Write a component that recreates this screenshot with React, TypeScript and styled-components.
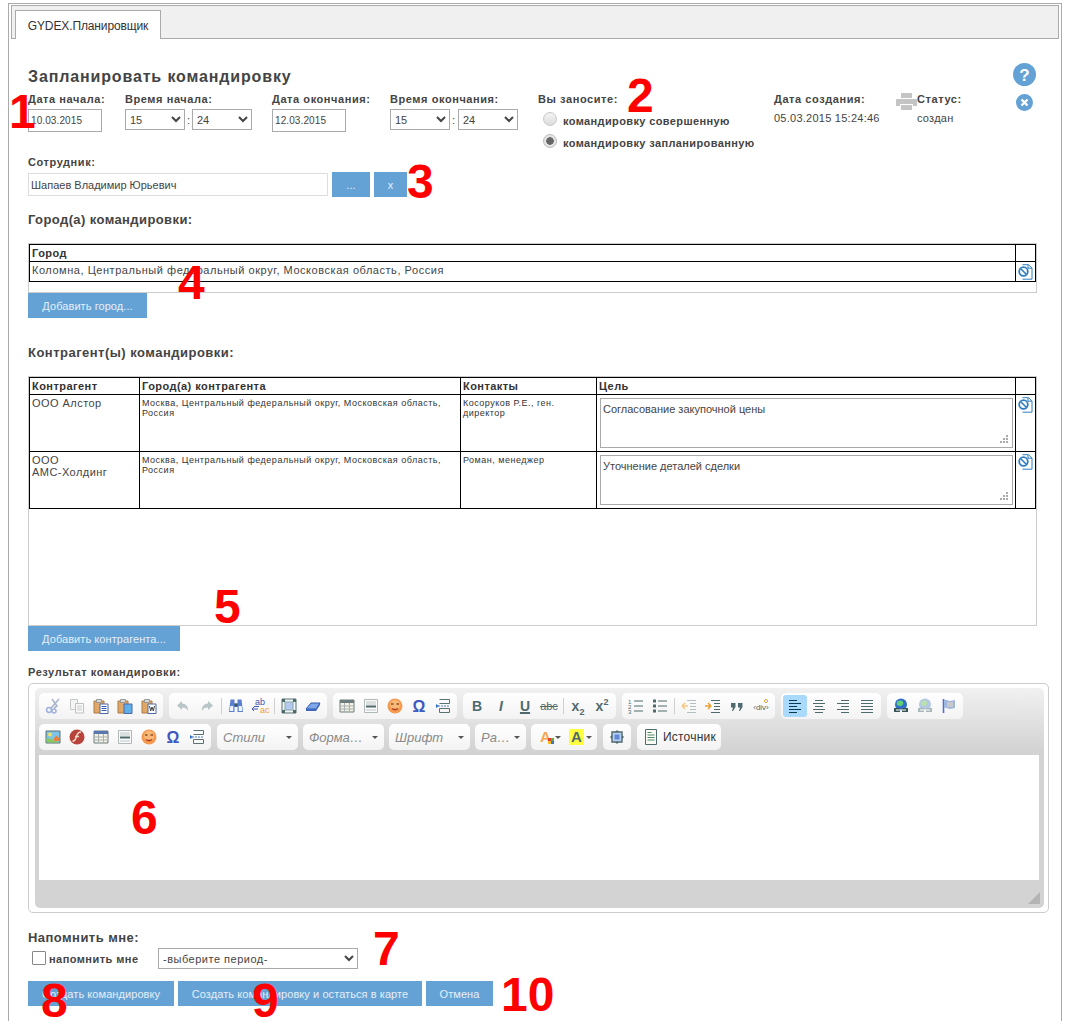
import React from 'react';
import styled, { createGlobalStyle } from 'styled-components';

const blue = '#64a2d6';

const Global = createGlobalStyle`
  html, body { margin: 0; padding: 0; height: 1021px; overflow: hidden; background: #fff; }
  body { font-family: "Liberation Sans", Arial, sans-serif; font-size: 12px; color: #444; }
`;

const Page = styled.div`
  position: relative;
  box-sizing: border-box;
  width: 1054px;
  height: 1018px;
  margin: 3px 0 0 8px;
  border: 1px solid #aaa;
  border-bottom: none;
  padding: 1px 2px 0;
`;

const TabStrip = styled.div`
  display: flex;
  align-items: flex-end;
  box-sizing: border-box;
  height: 34px;
  padding-left: 3px;
  background: #f0f0f0;
  border: 1px solid #aaa;
`;

const Tab = styled.div`
  box-sizing: border-box;
  width: 146px;
  height: 29px;
  margin-bottom: -1px;
  padding-top: 8px;
  text-align: center;
  background: #fff;
  border: 1px solid #aaa;
  border-bottom: none;
  font-size: 12px;
  letter-spacing: -0.12px;
  color: #333;
`;

const Form = styled.div`
  padding: 26px 22px 0 17px;
`;

const TitleRow = styled.div`
  display: flex;
  justify-content: space-between;
  height: 30px;
`;

const Title = styled.h1`
  margin: 2px 0 0;
  font-size: 16px;
  font-weight: bold;
  line-height: 20px;
  letter-spacing: 0.86px;
  color: #444;
`;

const HelpWrap = styled.div`
  margin: -2px 1px 0 0;
`;

const FieldsRow = styled.div`
  display: flex;
  height: 63px;
  margin-top: -2px;
`;

const Field = styled.div<{ $w: number }>`
  width: ${({ $w }) => $w}px;
  flex: none;
`;

const Label = styled.div`
  font-size: 11px;
  font-weight: bold;
  line-height: 13px;
  letter-spacing: 0.57px;
  color: #444;
  margin-bottom: 3px;
`;

const ResultLabel = styled(Label)`
  margin-top: 15px;
`;

const TextInput = styled.input<{ $w: number; $light?: boolean; $date?: boolean }>`
  display: block;
  box-sizing: border-box;
  width: ${({ $w }) => $w}px;
  height: 23px;
  padding: 0 2px;
  border: 1px solid ${({ $light }) => ($light ? '#ddd' : '#aaa')};
  border-radius: 0;
  outline: none;
  font-family: inherit;
  font-size: ${({ $date }) => ($date ? 10 : 11)}px;
  letter-spacing: ${({ $date }) => ($date ? 0.1 : 0)}px;
  color: #444;
`;

const TimeRow = styled.div`
  display: flex;
  align-items: center;
  gap: 2px;
  font-size: 11px;
`;

const Colon = styled.span<{ $w: number }>`
  width: ${({ $w }) => $w}px;
`;

const Select = styled.select<{ $w: number }>`
  box-sizing: border-box;
  width: ${({ $w }) => $w}px;
  height: 21px;
  padding: 0;
  background: #fff;
  border: 1px solid #aaa;
  border-radius: 0;
  font-family: inherit;
  font-size: 11px;
  color: #444;
`;

const RadioLine = styled.label`
  display: flex;
  align-items: center;
  gap: 6px;
  box-sizing: border-box;
  height: 22px;
  margin-left: 5px;
  padding-top: 2px;
  font-size: 11px;
  font-weight: bold;
  letter-spacing: 0.38px;
  color: #444;
`;

const Radio = styled.input`
  appearance: none;
  box-sizing: border-box;
  width: 14px;
  height: 14px;
  margin: -4px 0 0;
  border: 1px solid #c8c8c8;
  border-radius: 50%;
  background: linear-gradient(#f4f4f4, #dcdcdc);
  &:checked {
    background: radial-gradient(circle, #666 0 3.5px, #e4e4e4 4px);
    border-color: #bbb;
  }
`;

const Value = styled.div`
  font-size: 11px;
  letter-spacing: 0.25px;
  line-height: 13px;
  margin-top: 6px;
  color: #444;
`;

const StatusBlock = styled.div`
  display: flex;
`;

const SideIcons = styled.div`
  margin-left: auto;
  padding: 1px 4px 0 0;
`;

const EmployeeRow = styled.div`
  display: flex;
  align-items: center;
  gap: 4px;
`;

const Button = styled.button<{ $w: number }>`
  flex: none;
  box-sizing: border-box;
  width: ${({ $w }) => $w}px;
  height: 25px;
  padding: 0;
  border: none;
  background: ${blue};
  color: #e6eff7;
  font-family: inherit;
  font-size: 11px;
  letter-spacing: 0.07px;
`;

const SectionTitle = styled.h2<{ $top: number; $track?: number }>`
  margin: ${({ $top }) => $top}px 0 0;
  font-size: 13px;
  font-weight: bold;
  line-height: 16px;
  letter-spacing: ${({ $track }) => $track ?? 0.4}px;
  color: #444;
`;

const TablePanel = styled.div<{ $top: number; $h: number }>`
  box-sizing: border-box;
  width: 1009px;
  height: ${({ $h }) => $h}px;
  margin-top: ${({ $top }) => $top}px;
  border: 1px solid #ccc;
`;

const Grid = styled.table`
  width: 100%;
  table-layout: fixed;
  border-collapse: collapse;
  th, td {
    border: 1px solid #000;
    padding: 1px 2px;
    vertical-align: top;
    text-align: left;
    overflow: hidden;
  }
  th {
    height: 14px;
    font-size: 11px;
    line-height: 14px;
    letter-spacing: 0.45px;
    color: #333;
  }
`;

const CityCell = styled.td`
  height: 17px;
  font-size: 11px;
  line-height: 14px;
  letter-spacing: 0.54px;
`;

const NameCell = styled.td`
  font-size: 11px;
  line-height: 12px;
  letter-spacing: 0.45px;
  padding-top: 2px !important;
`;

const SmallCell = styled.td`
  font-size: 9px;
  line-height: 10px;
  letter-spacing: 0.5px;
  color: #333;
  padding-top: 3px !important;
`;

const GoalCell = styled.td`
  padding: 3px !important;
`;

const IconCell = styled.td`
  padding: 2px 0 0 2px !important;
  line-height: 0;
`;

const GoalArea = styled.textarea`
  display: block;
  box-sizing: border-box;
  width: 413px;
  height: 50px;
  padding: 4px 2px;
  border: 1px solid #aaa;
  border-radius: 0;
  resize: both;
  outline: none;
  font-family: inherit;
  font-size: 11px;
  color: #444;
  &::-webkit-resizer {
    background:
      linear-gradient(#aaa, #aaa) 9px 3px / 2px 2px no-repeat,
      linear-gradient(#aaa, #aaa) 6px 6px / 2px 2px no-repeat,
      linear-gradient(#aaa, #aaa) 9px 6px / 2px 2px no-repeat,
      linear-gradient(#aaa, #aaa) 3px 9px / 2px 2px no-repeat,
      linear-gradient(#aaa, #aaa) 6px 9px / 2px 2px no-repeat,
      linear-gradient(#aaa, #aaa) 9px 9px / 2px 2px no-repeat;
  }
`;

const EditorFrame = styled.div`
  box-sizing: border-box;
  width: 1021px;
  height: 230px;
  margin-top: 4px;
  padding: 4px 4px 4px 6px;
  border: 1px solid #ccc;
  border-radius: 5px;
`;

const EditorBox = styled.div`
  position: relative;
  height: 220px;
  border-radius: 5px;
  padding: 5px 0 0 4px;
  box-sizing: border-box;
  background: linear-gradient(#f1f1f1 0, #d3d3d3 62px);
`;

const ToolRow = styled.div<{ $gap: number }>`
  display: flex;
  gap: ${({ $gap }) => $gap}px;
  height: 26px;
  margin-bottom: 5px;
`;

const ToolGroup = styled.div<{ $ml?: number; $mr?: number }>`
  display: flex;
  flex: none;
  align-items: center;
  height: 26px;
  margin: 0 ${({ $mr }) => $mr ?? 0}px 0 ${({ $ml }) => $ml ?? 0}px;
  padding: 0 2px;
  border-radius: 5px;
  background: linear-gradient(#fff, #f3f3f3);
  box-sizing: border-box;
`;

const ToolBtn = styled.span<{ $on?: boolean; $w?: number }>`
  display: flex;
  align-items: center;
  justify-content: center;
  width: ${({ $w }) => $w ?? 24}px;
  height: 22px;
  border-radius: 3px;
  background: ${({ $on }) => ($on ? '#a9d9fb' : 'transparent')};
  color: #4f6a6d;
`;

const ToolSep = styled.span`
  width: 1px;
  height: 16px;
  margin: 0 2px;
  background: #d0d0d0;
`;

const Glyph = styled.span<{ $italic?: boolean; $under?: boolean; $strike?: boolean; $size?: number }>`
  font-family: "Liberation Sans", Arial, sans-serif;
  font-size: ${({ $size }) => $size ?? 14}px;
  font-weight: ${({ $strike }) => ($strike ? 'normal' : 'bold')};
  font-style: ${({ $italic }) => ($italic ? 'italic' : 'normal')};
  text-decoration: ${({ $under, $strike }) => ($under ? 'underline' : $strike ? 'line-through' : 'none')};
  text-decoration-thickness: ${({ $strike }) => ($strike ? 1 : 2)}px;
  color: #4f6a6d;
  sub, sup { font-size: 9px; line-height: 0; }
`;

const Combo = styled.div<{ $w: number }>`
  display: flex;
  flex: none;
  align-items: center;
  justify-content: space-between;
  box-sizing: border-box;
  width: ${({ $w }) => $w}px;
  height: 26px;
  padding: 0 6px;
  border-radius: 5px;
  background: linear-gradient(#fff, #f3f3f3);
  font-size: 13px;
  font-style: italic;
  color: #8a8a8a;
  white-space: nowrap;
`;

const Caret = styled.span`
  width: 0;
  height: 0;
  border-left: 3px solid transparent;
  border-right: 3px solid transparent;
  border-top: 3px solid #555;
`;

const SourceBtn = styled(ToolGroup)`
  gap: 6px;
  width: 84px;
  padding: 0 0 0 8px;
  font-size: 12px;
  letter-spacing: 0.2px;
  color: #333;
`;

const EditArea = styled.div`
  height: 125px;
  width: 1000px;
  background: #fff;
`;

const Grip = styled.svg`
  position: absolute;
  right: 4px;
  bottom: 4px;
`;

const RemindTitle = styled.div`
  margin-top: 17px;
  font-size: 13px;
  font-weight: bold;
  line-height: 15px;
  letter-spacing: 0.45px;
  color: #444;
`;

const RemindRow = styled.div`
  display: flex;
  align-items: center;
  height: 21px;
  margin-top: 3px;
`;

const CheckLabel = styled.label`
  display: flex;
  align-items: center;
  width: 130px;
  padding-left: 4px;
  box-sizing: border-box;
  font-size: 11px;
  font-weight: bold;
  letter-spacing: 0.45px;
`;

const Check = styled.input`
  appearance: none;
  box-sizing: border-box;
  width: 14px;
  height: 14px;
  margin: -2px 3px 0 0;
  border: 1px solid #888;
  border-radius: 1px;
  background: #fff;
`;

const PeriodSelect = styled(Select)`
  letter-spacing: 0.5px;
`;

const ButtonsRow = styled.div`
  display: flex;
  gap: 4px;
  margin-top: 12px;
`;

const Marker = styled.div<{ $x: number; $y: number }>`
  position: absolute;
  left: ${({ $x }) => $x}px;
  top: ${({ $y }) => $y}px;
  font-family: "Liberation Sans", Arial, sans-serif;
  font-size: 48px;
  font-weight: bold;
  line-height: 40px;
  color: #f00;
  pointer-events: none;
`;

const Svg: React.FC<{ size?: number; children: React.ReactNode }> = ({ size = 16, children }) => (
  <svg width={size} height={size} viewBox="0 0 16 16" fill="none">{children}</svg>
);

const Scissors = () => (
  <Svg>
    <path d="M14 1 6 10M7 1l5 7-3 2" stroke="#aab5cc" strokeWidth="1.6" />
    <circle cx="4" cy="12" r="2.4" stroke="#9fb0dc" strokeWidth="1.5" />
    <circle cx="9" cy="13" r="2" stroke="#9fb0dc" strokeWidth="1.5" />
  </Svg>
);
const Copy = () => (
  <Svg>
    <path d="M1.5 1.5h7v10h-7z" fill="#f4f4f4" stroke="#c4c8c8" />
    <path d="M6.5 5.500h8v9.500h-8z" fill="#fafafa" stroke="#bcc2c2" />
    <path d="M8 8h5M8 10h5M8 12h5" stroke="#c8cccc" />
  </Svg>
);
const Paste: React.FC<{ kind: 'plain' | 'text' | 'word' }> = ({ kind }) => (
  <Svg>
    <path d="M1 3h10v12H1z" fill="#e0a868" stroke="#b07c40" />
    <path d="M3.500 1.500h5v3h-5z" fill="#d8d8d8" stroke="#999" />
    <path d="M7 6h8v9.500H7z" fill={kind === 'text' ? '#5fb0e8' : '#fff'} stroke="#5068a8" />
    {kind === 'plain' && <path d="M8.500 8.500h5M8.500 10.500h5M8.500 12.500h5" stroke="#3858b8" />}
    {kind === 'word' && <path d="M8.500 8l1.200 5 1.300-4 1.300 4 1.200-5" stroke="#444" />}
  </Svg>
);
const Arrow: React.FC<{ flip?: boolean }> = ({ flip }) => (
  <Svg>
    <path
      d={flip ? 'M9 3l5 4.500-5 4.500V9.500C6 9.500 4 10.500 3 13c-.5-4 1.500-7 6-7.500z' : 'M7 3 2 7.500 7 12V9.500c3 0 5 1 6 3.500.5-4-1.500-7-6-7.500z'}
      fill="#b8c6c8"
    />
  </Svg>
);
const Binoculars = () => (
  <Svg>
    <path d="M2.500 1.500h4v4h3v-4h4L15 14H9.500V9h-3v5H1z" fill="#5a7ed0" />
    <path d="M2.300 8h3v5h-3.500zM10.700 8h3l.5 5h-3.500z" fill="#eef4fc" />
    <path d="M6.500 5.500h3v3h-3z" fill="#3c5658" />
  </Svg>
);
const Replace = () => (
  <svg width="20" height="16" viewBox="0 0 20 16">
    <text x="5" y="7" fontFamily="Liberation Sans" fontSize="9" fill="#4058b0">ab</text>
    <text x="10" y="15" fontFamily="Liberation Sans" fontSize="9" fill="#f0a030">ac</text>
    <path d="M2 11h6M2 11l2-2M2 11l2 2M4 8.500h5" stroke="#4058b0" />
  </svg>
);
const SelectAll = () => (
  <Svg>
    <path d="M1 1h14v14H1z" fill="#eef3f4" stroke="#5a7272" />
    <path d="M4 4h8v8H4z" fill="#b4c8f0" stroke="#8aa" />
    <path d="M1 1h3v3H1zM12 1h3v3h-3zM1 12h3v3H1zM12 12h3v3h-3z" fill="#4f6a6d" />
  </Svg>
);
const Eraser = () => (
  <Svg>
    <path d="M1 11 6 5h9l-4 6z" fill="#7fa8ea" stroke="#3058b0" />
    <path d="M1 11v2h10l4-6V5l-4 6z" fill="#3f68c0" />
  </Svg>
);
const TableIcon: React.FC<{ dark?: boolean }> = ({ dark }) => (
  <Svg>
    <path d="M1 2h14v12H1z" fill="#f4f0e4" stroke="#6c7c7c" />
    <path d="M1 2h14v3H1z" fill={dark ? '#6c7c7c' : '#5a78b0'} />
    <path d="M1 8h14M1 11h14M5.500 5v9M10.500 5v9" stroke="#a8b0b0" />
  </Svg>
);
const HrIcon = () => (
  <Svg>
    <path d="M1.500 1.500h13v13h-13z" fill="#fafafa" stroke="#b0b8b8" />
    <path d="M3 4h10M3 6h10M3 12h10" stroke="#c0c6c6" />
    <path d="M3 8.500h10" stroke="#4f6a6d" strokeWidth="2" />
  </Svg>
);
const Smiley = () => (
  <Svg>
    <circle cx="8" cy="8" r="7.500" fill="#f59a50" />
    <circle cx="8" cy="7" r="5" fill="#f9b878" />
    <path d="M4 6h2.500M9.500 6H12" stroke="#885020" strokeWidth="1.500" />
    <path d="M5 10.500c2 1.500 4 1.500 6 0" stroke="#b04020" strokeWidth="1.500" />
  </Svg>
);
const Omega = () => (
  <svg width="16" height="16" viewBox="0 0 16 16">
    <text x="8" y="14" textAnchor="middle" fontFamily="Liberation Sans" fontWeight="bold" fontSize="16" fill="#4058c0">Ω</text>
  </svg>
);
const PageBreak = () => (
  <Svg>
    <path d="M4.500 1.500h10v4M4.500 5.500h10M4.500 10.500h10v4h-10z" stroke="#5a7272" />
    <path d="M1 6v4l3-2z" fill="#3070d0" />
    <path d="M3 8h12" stroke="#5080c0" strokeDasharray="2 1" />
  </Svg>
);
const ListNum = () => (
  <svg width="16" height="16" viewBox="0 0 16 16">
    <text x="0" y="5.500" fontFamily="Liberation Sans" fontSize="6" fill="#4f6a6d">1</text>
    <text x="0" y="10.500" fontFamily="Liberation Sans" fontSize="6" fill="#4f6a6d">2</text>
    <text x="0" y="15.500" fontFamily="Liberation Sans" fontSize="6" fill="#4f6a6d">3</text>
    <path d="M6 3h9M6 8h9M6 13h9" stroke="#4f6a6d" />
  </svg>
);
const ListDot = () => (
  <Svg>
    <path d="M1 1.500h3v3H1zM1 6.500h3v3H1zM1 11.500h3v3H1z" fill="#4f6a6d" />
    <path d="M6 3h9M6 8h9M6 13h9" stroke="#4f6a6d" />
  </Svg>
);
const Indent: React.FC<{ out?: boolean }> = ({ out }) => (
  <Svg>
    <path d="M6 2.500h9M9 5.500h6M9 8.500h6M9 11.500h6M6 14.500h9" stroke={out ? '#b0c0c0' : '#4f6a6d'} />
    <path d={out ? 'M7 8H1M1 8l3-3M1 8l3 3' : 'M0 8h6M6 8 3 5M6 8l-3 3'} stroke={out ? '#f8c880' : '#f0a030'} strokeWidth="1.500" />
  </Svg>
);
const Quote = () => (
  <Svg>
    <path d="M2 5h4.500v4L4 13H3l1-3.500H2zM9 5h4.500v4L11 13h-1l1-3.500H9z" fill="#4f6a6d" />
  </Svg>
);
const DivIcon = () => (
  <svg width="18" height="16" viewBox="0 0 18 16">
    <text x="9" y="12" textAnchor="middle" fontFamily="Liberation Sans" fontSize="8" fill="#4f6a6d">‹div›</text>
    <path d="M14 1l2 2-2 2-2-2z" stroke="#f0a030" fill="none" />
  </svg>
);
const Align: React.FC<{ mode: 'l' | 'c' | 'r' | 'j'; dark?: boolean }> = ({ mode, dark }) => {
  const lines: Record<string, string> = {
    l: 'M2 2.500h8M2 5.500h12M2 8.500h8M2 11.500h12M2 14.500h8',
    c: 'M4 2.500h8M2 5.500h12M4 8.500h8M2 11.500h12M4 14.500h8',
    r: 'M6 2.500h8M2 5.500h12M6 8.500h8M2 11.500h12M6 14.500h8',
    j: 'M2 2.500h12M2 5.500h12M2 8.500h12M2 11.500h12M2 14.500h12',
  };
  return <Svg><path d={lines[mode]} stroke={dark ? '#0a3a50' : '#4f6a6d'} /></Svg>;
};
const Link: React.FC<{ off?: boolean }> = ({ off }) => (
  <Svg>
    <circle cx="8" cy="6.500" r="6" fill={off ? '#b4c8e4' : '#3070c8'} />
    <path d="M4 4c2-2 5-2 6 0 1 2-1 4-3 4-2 0-4-1-3-4z" fill={off ? '#b8e0b0' : '#60d070'} />
    <path d="M1 10h6v4H1zM9 10h6v4H9z" fill={off ? '#a8b8b8' : '#3c5658'} />
    <path d="M3 12h10" stroke="#fff" />
  </Svg>
);
const Flag = () => (
  <Svg>
    <path d="M2.500 1v14" stroke="#5070d0" strokeWidth="1.600" />
    <path d="M3 2c3-1 4 1 6 1l5-1v8l-5 1c-2 0-3-2-6-1z" fill="#9fb8e0" />
    <path d="M6 4h6v5H6z" fill="#c8c8c8" />
  </Svg>
);
const ImageIcon = () => (
  <Svg>
    <path d="M1 2h14v12H1z" fill="#7cc4e8" stroke="#5c7070" />
    <path d="M1.500 13.500V9l5 1 8 3.500z" fill="#8cc860" />
    <path d="M9 9l2.500-2.500L14 9v3H9z" fill="#e88040" />
    <circle cx="5" cy="5.500" r="2" fill="#f8e060" />
  </Svg>
);
const Flash = () => (
  <svg width="16" height="16" viewBox="0 0 16 16">
    <circle cx="8" cy="8" r="7.500" fill="#b8433a" />
    <path d="M12 3c-4 0-4 3-5 6-.5 2-2 3-3.500 3.500M6 7.500h4" stroke="#f4d8c8" strokeWidth="1.400" fill="none" />
  </svg>
);
const ColorA: React.FC<{ bg?: boolean }> = ({ bg }) => (
  <svg width="18" height="16" viewBox="0 0 18 16">
    {bg && <rect x="1" y="0" width="15" height="16" fill="#ffff40" />}
    <text x="8.500" y="13" textAnchor="middle" fontFamily="Liberation Sans" fontWeight="bold" fontSize="15" fill={bg ? '#4f6a6d' : '#f8a850'}>A</text>
    {!bg && <path d="M11 9h3v3h-3z" fill="#e04030" />}
    {!bg && <path d="M14 9h3v3h-3z" fill="#60b040" />}
    {!bg && <path d="M11 12h3v3h-3z" fill="#f0c020" />}
    {!bg && <path d="M14 12h3v3h-3z" fill="#4070d0" />}
  </svg>
);
const Chip = () => (
  <Svg>
    <path d="M3 3h10v10H3z" fill="#b8d0f4" stroke="#4f6a6d" strokeWidth="1.400" />
    <path d="M5.500 5.500h5v5h-5z" fill="#6488d8" />
    <path d="M1 8l2-2v4zM15 8l-2-2v4zM8 1 6 3h4zM8 15l-2-2h4z" fill="#4f6a6d" />
  </Svg>
);
const SourceIcon = () => (
  <svg width="12" height="16" viewBox="0 0 12 16" fill="none">
    <path d="M.5.5h11v15H.5z" fill="#fafaf4" stroke="#4f6a6d" />
    <path d="M2.500 3.500h4M2.500 6h7M2.500 8.500h7M2.500 11h7" stroke="#4f8a6d" />
  </svg>
);

const Printer = () => (
  <svg width="21" height="17" viewBox="0 0 21 17">
    <path d="M5 0h11v5H5z" fill="#c4c4c4" />
    <path d="M1 6h19a1 1 0 0 1 1 1v6h-4v-2H4v2H0V7a1 1 0 0 1 1-1z" fill="#c4c4c4" />
    <path d="M5 12h11v5H5z" fill="#c4c4c4" />
  </svg>
);
const HelpIcon = () => (
  <svg width="23" height="23" viewBox="0 0 23 23">
    <circle cx="11.500" cy="11.500" r="11.500" fill={blue} />
    <text x="11.500" y="17.500" textAnchor="middle" fontFamily="Liberation Sans" fontWeight="bold" fontSize="17" fill="#fff">?</text>
  </svg>
);
const CloseIcon = () => (
  <svg width="17" height="17" viewBox="0 0 17 17">
    <circle cx="8.500" cy="8.500" r="8.500" fill={blue} />
    <path d="M5.500 5.500l6 6M11.500 5.500l-6 6" stroke="#fff" strokeWidth="2.400" />
  </svg>
);
const RemoveDoc = () => (
  <svg width="15" height="16" viewBox="0 0 15 16" fill="none">
    <path d="M4.500 .7h6l3.500 3.500v11H4.500" stroke="#2f7fc0" fill="#fff" />
    <path d="M10 .7v3.500h4" stroke="#2f7fc0" />
    <circle cx="5.500" cy="7.500" r="4.300" stroke="#2f7fc0" strokeWidth="1.800" fill="#fff" />
    <path d="M2.700 4.700l5.600 5.600" stroke="#2f7fc0" strokeWidth="1.600" />
  </svg>
);
const Resize = () => (
  <Grip width="12" height="12" viewBox="0 0 12 12">
    <path d="M12 0v12H0z" fill="#b4b4b4" />
  </Grip>
);

const hours = <option>15</option>;
const mins = <option>24</option>;

const contractors = [
  {
    name: <>ООО Алстор</>,
    city: 'Москва, Центральный федеральный округ, Московская область, Россия',
    contact: 'Косоруков Р.Е., ген. директор',
    goal: 'Согласование закупочной цены',
  },
  {
    name: <>ООО<br />АМС-Холдинг</>,
    city: 'Москва, Центральный федеральный округ, Московская область, Россия',
    contact: 'Роман, менеджер',
    goal: 'Уточнение деталей сделки',
  },
];

const markers: [string, number, number][] = [
  ['1', 0, 88], ['2', 618, 72], ['3', 398, 158], ['4', 169, 259], ['5', 205, 583],
  ['6', 122, 794], ['7', 364, 925], ['8', 32, 977], ['9', 243, 977], ['10', 492, 971],
];

const App: React.FC = () => {
  return (
    <Page>
      <Global />
      <TabStrip>
        <Tab>GYDEX.Планировщик</Tab>
      </TabStrip>
      <Form>
        <TitleRow>
          <Title>Запланировать командировку</Title>
          <HelpWrap><HelpIcon /></HelpWrap>
        </TitleRow>
        <FieldsRow>
          <Field $w={97}>
            <Label>Дата начала:</Label>
            <TextInput $w={74} $date defaultValue="10.03.2015" />
          </Field>
          <Field $w={147}>
            <Label>Время начала:</Label>
            <TimeRow>
              <Select $w={60}>{hours}</Select><Colon $w={3}>:</Colon><Select $w={60}>{mins}</Select>
            </TimeRow>
          </Field>
          <Field $w={118}>
            <Label>Дата окончания:</Label>
            <TextInput $w={74} $date defaultValue="12.03.2015" />
          </Field>
          <Field $w={148}>
            <Label>Время окончания:</Label>
            <TimeRow>
              <Select $w={60}>{hours}</Select><Colon $w={4}>:</Colon><Select $w={60}>{mins}</Select>
            </TimeRow>
          </Field>
          <Field $w={236}>
            <Label>Вы заносите:</Label>
            <RadioLine><Radio type="radio" name="kind" />командировку совершенную</RadioLine>
            <RadioLine><Radio type="radio" name="kind" defaultChecked />командировку запланированную</RadioLine>
          </Field>
          <Field $w={122}>
            <Label>Дата создания:</Label>
            <Value>05.03.2015 15:24:46</Value>
          </Field>
          <StatusBlock>
            <Printer />
            <Field $w={60}>
              <Label>Статус:</Label>
              <Value>создан</Value>
            </Field>
          </StatusBlock>
          <SideIcons><CloseIcon /></SideIcons>
        </FieldsRow>
        <Label>Сотрудник:</Label>
        <EmployeeRow>
          <TextInput $w={300} $light defaultValue="Шапаев Владимир Юрьевич" />
          <Button $w={38}>...</Button>
          <Button $w={33}>x</Button>
        </EmployeeRow>
        <SectionTitle $top={15}>Город(а) командировки:</SectionTitle>
        <TablePanel $top={15} $h={50}>
          <Grid>
            <colgroup><col /><col width={20} /></colgroup>
            <thead><tr><th>Город</th><th /></tr></thead>
            <tbody>
              <tr>
                <CityCell>Коломна, Центральный федеральный округ, Московская область, Россия</CityCell>
                <IconCell><RemoveDoc /></IconCell>
              </tr>
            </tbody>
          </Grid>
        </TablePanel>
        <Button $w={119}>Добавить город...</Button>
        <SectionTitle $top={27} $track={0.48}>Контрагент(ы) командировки:</SectionTitle>
        <TablePanel $top={15} $h={250}>
          <Grid>
            <colgroup><col width={110} /><col width={321} /><col width={136} /><col /><col width={20} /></colgroup>
            <thead>
              <tr><th>Контрагент</th><th>Город(а) контрагента</th><th>Контакты</th><th>Цель</th><th /></tr>
            </thead>
            <tbody>
              {contractors.map((c, i) => (
                <tr key={i}>
                  <NameCell>{c.name}</NameCell>
                  <SmallCell>{c.city}</SmallCell>
                  <SmallCell>{c.contact}</SmallCell>
                  <GoalCell><GoalArea defaultValue={c.goal} /></GoalCell>
                  <IconCell><RemoveDoc /></IconCell>
                </tr>
              ))}
            </tbody>
          </Grid>
        </TablePanel>
        <Button $w={152}>Добавить контрагента...</Button>
        <ResultLabel>Результат командировки:</ResultLabel>
        <EditorFrame>
          <EditorBox>
            <ToolRow $gap={6}>
              <ToolGroup>
                <ToolBtn><Scissors /></ToolBtn><ToolBtn><Copy /></ToolBtn><ToolBtn><Paste kind="plain" /></ToolBtn>
                <ToolBtn><Paste kind="text" /></ToolBtn><ToolBtn><Paste kind="word" /></ToolBtn>
              </ToolGroup>
              <ToolGroup>
                <ToolBtn><Arrow /></ToolBtn><ToolBtn><Arrow flip /></ToolBtn><ToolSep />
                <ToolBtn><Binoculars /></ToolBtn><ToolBtn><Replace /></ToolBtn><ToolSep />
                <ToolBtn><SelectAll /></ToolBtn><ToolBtn><Eraser /></ToolBtn>
              </ToolGroup>
              <ToolGroup>
                <ToolBtn><TableIcon dark /></ToolBtn><ToolBtn><HrIcon /></ToolBtn><ToolBtn><Smiley /></ToolBtn>
                <ToolBtn><Omega /></ToolBtn><ToolBtn><PageBreak /></ToolBtn>
              </ToolGroup>
              <ToolGroup>
                <ToolBtn><Glyph>B</Glyph></ToolBtn><ToolBtn><Glyph $italic>I</Glyph></ToolBtn>
                <ToolBtn><Glyph $under>U</Glyph></ToolBtn><ToolBtn><Glyph $strike $size={11}>abc</Glyph></ToolBtn><ToolSep />
                <ToolBtn><Glyph>x<sub>2</sub></Glyph></ToolBtn><ToolBtn><Glyph>x<sup>2</sup></Glyph></ToolBtn>
              </ToolGroup>
              <ToolGroup>
                <ToolBtn><ListNum /></ToolBtn><ToolBtn><ListDot /></ToolBtn><ToolSep />
                <ToolBtn><Indent out /></ToolBtn><ToolBtn><Indent /></ToolBtn>
                <ToolBtn><Quote /></ToolBtn><ToolBtn><DivIcon /></ToolBtn>
              </ToolGroup>
              <ToolGroup>
                <ToolBtn $on><Align mode="l" dark /></ToolBtn><ToolBtn><Align mode="c" /></ToolBtn>
                <ToolBtn><Align mode="r" /></ToolBtn><ToolBtn><Align mode="j" /></ToolBtn>
              </ToolGroup>
              <ToolGroup>
                <ToolBtn><Link /></ToolBtn><ToolBtn><Link off /></ToolBtn><ToolBtn><Flag /></ToolBtn>
              </ToolGroup>
            </ToolRow>
            <ToolRow $gap={5}>
              <ToolGroup $mr={1}>
                <ToolBtn><ImageIcon /></ToolBtn><ToolBtn><Flash /></ToolBtn><ToolBtn><TableIcon /></ToolBtn>
                <ToolBtn><HrIcon /></ToolBtn><ToolBtn><Smiley /></ToolBtn><ToolBtn><Omega /></ToolBtn><ToolBtn><PageBreak /></ToolBtn>
              </ToolGroup>
              <Combo $w={81}>Стили<Caret /></Combo>
              <Combo $w={81}>Форма…<Caret /></Combo>
              <Combo $w={81}>Шрифт<Caret /></Combo>
              <Combo $w={51}>Ра…<Caret /></Combo>
              <ToolGroup>
                <ToolBtn $w={31}><ColorA /><Caret /></ToolBtn>
                <ToolBtn $w={31}><ColorA bg /><Caret /></ToolBtn>
              </ToolGroup>
              <ToolGroup $ml={1}><ToolBtn><Chip /></ToolBtn></ToolGroup>
              <SourceBtn $ml={1}><SourceIcon />Источник</SourceBtn>
            </ToolRow>
            <EditArea />
            <Resize />
          </EditorBox>
        </EditorFrame>
        <RemindTitle>Напомнить мне:</RemindTitle>
        <RemindRow>
          <CheckLabel><Check type="checkbox" />напомнить мне</CheckLabel>
          <PeriodSelect $w={200}><option>-выберите период-</option></PeriodSelect>
        </RemindRow>
        <ButtonsRow>
          <Button $w={146}>Создать командировку</Button>
          <Button $w={244}>Создать командировку и остаться в карте</Button>
          <Button $w={67}>Отмена</Button>
        </ButtonsRow>
      </Form>
      {markers.map(([t, x, y]) => (
        <Marker key={t} $x={x} $y={y}>{t}</Marker>
      ))}
    </Page>
  );
};

export default App;
